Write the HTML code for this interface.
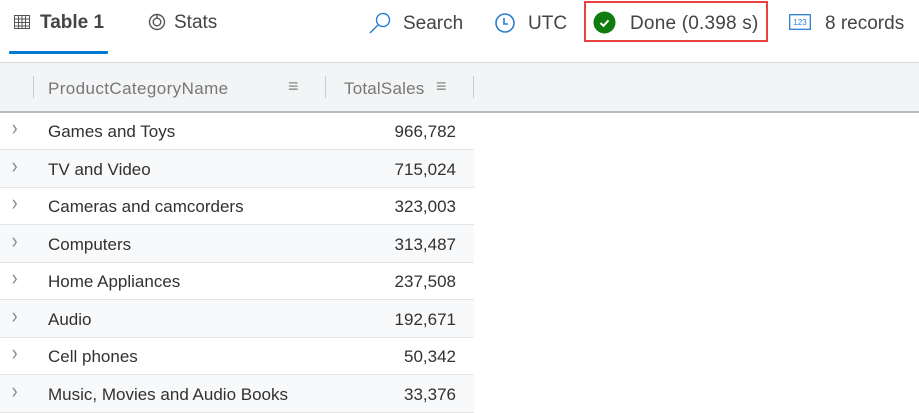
<!DOCTYPE html>
<html><head><style>
body{margin:0;width:919px;height:403px;overflow:hidden;background:#fff;font-family:"Liberation Sans",sans-serif;color:#323130;position:relative}
.a{position:absolute;white-space:nowrap}
.top{font-size:19px;color:#444}
.hdr{position:absolute;left:0;top:62px;width:919px;height:48px;background:#f3f4f5;border-top:1px solid #d6d6d6;border-bottom:2px solid #bbb}
.row{position:absolute;left:0;width:474px;height:37px;border-bottom:1px solid #e4e4e4;font-size:17px}
.row.alt{background:#f8f9fa}
.row .n{position:absolute;left:48px;top:10px}
.row .v{position:absolute;right:18px;top:10px}
.row .c{position:absolute;left:11px;top:3px;font-size:22px;color:#888;transform:scaleX(0.8)}
</style></head><body>
<svg class="a" style="left:14px;top:15px" width="16" height="14" viewBox="0 0 16 14"><g fill="none" stroke="#555" stroke-width="1"><rect x="0.5" y="0.5" width="15" height="13"/><path d="M0.5 4h15M0.5 7.5h15M0.5 11h15M4.5 .5v13M8 .5v13M11.5 .5v13"/></g></svg>
<div class="a top" style="left:40px;top:12px;font-weight:bold;color:#444">Table 1</div>
<div class="a" style="left:9px;top:51px;width:99px;height:3px;background:#0078d4;border-radius:1px"></div>
<svg class="a" style="left:148px;top:13px" width="18" height="18" viewBox="0 0 18 18"><g fill="none" stroke="#555" stroke-width="1.4"><circle cx="9" cy="9" r="7.5"/><circle cx="9" cy="9" r="3.8"/><path d="M9 1.5v3.7"/></g></svg>
<div class="a top" style="left:174px;top:12px">Stats</div>
<svg class="a" style="left:367px;top:10px" width="26" height="26" viewBox="0 0 26 26"><g fill="none" stroke="#2b7fd0" stroke-width="1.4"><circle cx="16" cy="10" r="6.5"/><path d="M11 15l-8 8"/></g></svg>
<div class="a top" style="left:403px;top:13px">Search</div>
<svg class="a" style="left:494px;top:12px" width="22" height="22" viewBox="0 0 22 22"><g fill="none" stroke="#2b7fd0" stroke-width="1.6"><circle cx="11" cy="11" r="9"/><path d="M10 6v6h4"/></g></svg>
<div class="a top" style="left:528px;top:13px">UTC</div>
<div class="a" style="left:584px;top:1px;width:184px;height:41px;border:2px solid #e8413f;box-sizing:border-box"></div>
<svg class="a" style="left:593px;top:11px" width="23" height="23" viewBox="0 0 23 23"><circle cx="11.5" cy="11.5" r="11" fill="#107c10"/><path d="M7.5 12l3 2.8 5-5.5" fill="none" stroke="#fff" stroke-width="2"/></svg>
<div class="a top" style="left:630px;top:13px;letter-spacing:0.2px">Done (0.398 s)</div>
<svg class="a" style="left:789px;top:14px" width="22" height="16" viewBox="0 0 22 16"><rect x="0.7" y="0.7" width="20.6" height="14.6" fill="none" stroke="#2b7fd0" stroke-width="1.3"/><text x="11" y="11" font-size="8" text-anchor="middle" fill="#2b7fd0" font-family="Liberation Sans">123</text></svg>
<div class="a top" style="left:825px;top:13px">8 records</div>
<div class="hdr"></div>
<div class="a" style="left:33px;top:76px;width:1px;height:22px;background:#ccc"></div>
<div class="a" style="left:48px;top:79px;font-size:17px;color:#777;letter-spacing:0.4px">ProductCategoryName</div>
<div class="a" style="left:288px;top:76px;font-size:18px;color:#888">≡</div>
<div class="a" style="left:325px;top:76px;width:1px;height:22px;background:#ccc"></div>
<div class="a" style="left:344px;top:79px;font-size:17px;color:#777;letter-spacing:0.2px">TotalSales</div>
<div class="a" style="left:436px;top:76px;font-size:18px;color:#888">≡</div>
<div class="a" style="left:473px;top:76px;width:1px;height:22px;background:#ccc"></div>
<div class="row" style="top:112px"><span class="c">&#x203A;</span><span class="n">Games and Toys</span><span class="v">966,782</span></div>
<div class="row alt" style="top:150px"><span class="c">&#x203A;</span><span class="n">TV and Video</span><span class="v">715,024</span></div>
<div class="row" style="top:187px"><span class="c">&#x203A;</span><span class="n">Cameras and camcorders</span><span class="v">323,003</span></div>
<div class="row alt" style="top:225px"><span class="c">&#x203A;</span><span class="n">Computers</span><span class="v">313,487</span></div>
<div class="row" style="top:262px"><span class="c">&#x203A;</span><span class="n">Home Appliances</span><span class="v">237,508</span></div>
<div class="row alt" style="top:300px"><span class="c">&#x203A;</span><span class="n">Audio</span><span class="v">192,671</span></div>
<div class="row" style="top:337px"><span class="c">&#x203A;</span><span class="n">Cell phones</span><span class="v">50,342</span></div>
<div class="row alt" style="top:375px"><span class="c">&#x203A;</span><span class="n">Music, Movies and Audio Books</span><span class="v">33,376</span></div>
</body></html>
